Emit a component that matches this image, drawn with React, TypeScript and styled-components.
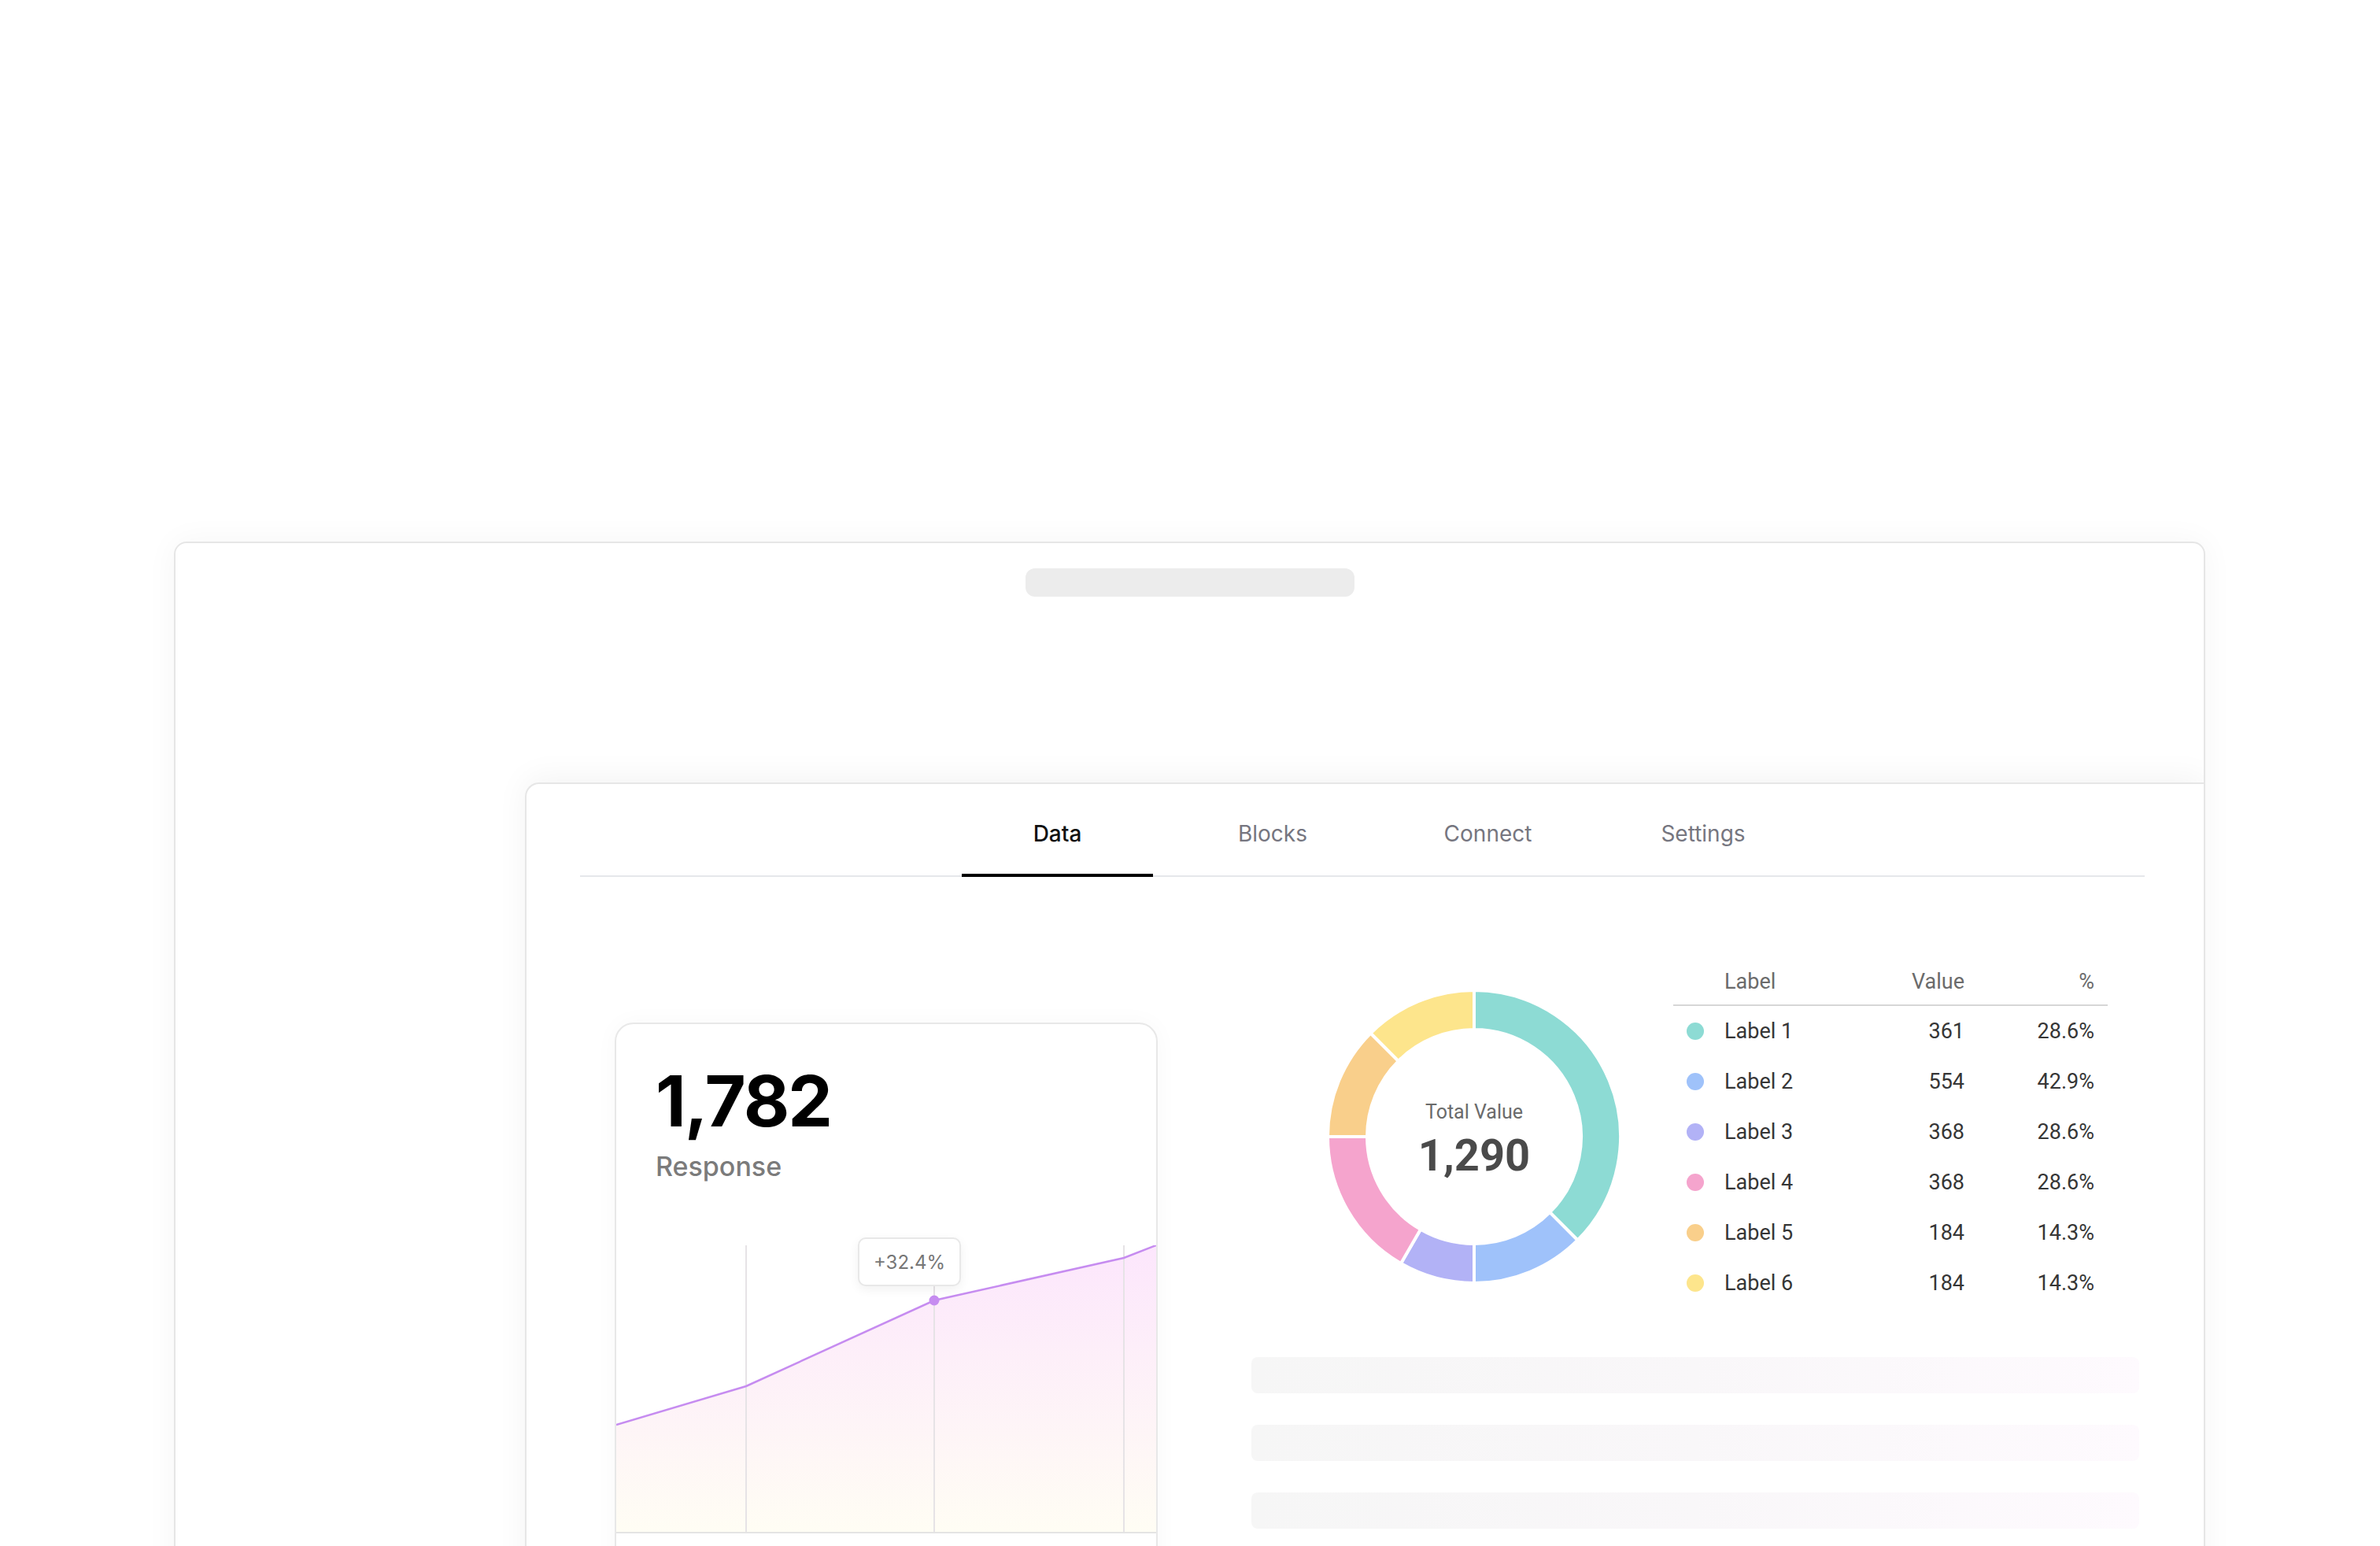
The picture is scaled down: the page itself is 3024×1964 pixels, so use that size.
import React from 'react'
import styled, { createGlobalStyle } from 'styled-components'

const GlobalStyle = createGlobalStyle`
    html, body {
        margin: 0;
        padding: 0;
        background: #ffffff;
    }
    body {
        font-family: Inter, "Noto Sans", sans-serif;
        -webkit-font-smoothing: antialiased;
    }
`

const tabs = ['Data', 'Blocks', 'Connect', 'Settings']

const segments = [
    { from: 0, to: 135, color: '#8ddbd4' },
    { from: 135, to: 180, color: '#9fc2fa' },
    { from: 180, to: 210, color: '#b2b2f6' },
    { from: 210, to: 270, color: '#f5a4cd' },
    { from: 270, to: 315, color: '#f9cf8b' },
    { from: 315, to: 360, color: '#fde58c' },
]

const rows = [
    { label: 'Label 1', value: 361, pct: '28.6%', color: '#8ddbd4' },
    { label: 'Label 2', value: 554, pct: '42.9%', color: '#9fc2fa' },
    { label: 'Label 3', value: 368, pct: '28.6%', color: '#b2b2f6' },
    { label: 'Label 4', value: 368, pct: '28.6%', color: '#f5a4cd' },
    { label: 'Label 5', value: 184, pct: '14.3%', color: '#f9cf8b' },
    { label: 'Label 6', value: 184, pct: '14.3%', color: '#fde58c' },
]

const polar = (cx: number, cy: number, r: number, deg: number) => {
    const a = ((deg - 90) * Math.PI) / 180
    return [cx + r * Math.cos(a), cy + r * Math.sin(a)]
}

const arcPath = (from: number, to: number, ro: number, ri: number, c: number) => {
    const large = to - from > 180 ? 1 : 0
    const [x1, y1] = polar(c, c, ro, from)
    const [x2, y2] = polar(c, c, ro, to)
    const [x3, y3] = polar(c, c, ri, to)
    const [x4, y4] = polar(c, c, ri, from)
    return `M${x1} ${y1} A${ro} ${ro} 0 ${large} 1 ${x2} ${y2} L${x3} ${y3} A${ri} ${ri} 0 ${large} 0 ${x4} ${y4} Z`
}

const Donut = () => (
    <DonutWrap>
        <svg width="372" height="372" viewBox="0 0 372 372">
            {segments.map((s) => (
                <path
                    key={s.from}
                    d={arcPath(s.from, s.to, 186, 136, 186)}
                    fill={s.color}
                    stroke="#ffffff"
                    strokeWidth="4"
                    strokeLinejoin="miter"
                />
            ))}
        </svg>
        <DonutCenter>
            <DonutCaption>Total Value</DonutCaption>
            <DonutValue>1,290</DonutValue>
        </DonutCenter>
    </DonutWrap>
)

const chartPoints: [number, number][] = [
    [0, 228],
    [165, 179],
    [404, 70],
    [645, 16],
    [686, 0],
]

const AreaChart = () => {
    const line = chartPoints.map(([x, y]) => `${x},${y}`).join(' ')
    const area = `M0,364 L${line.replace(/ /g, ' L')} L686,364 Z`
    return (
        <ChartWrap>
            <svg width="686" height="380" viewBox="0 0 686 380">
                <defs>
                    <linearGradient id="areaFill" x1="0" y1="0" x2="0" y2="1">
                        <stop offset="0%" stopColor="#fce6fc" />
                        <stop offset="100%" stopColor="#fffdf4" />
                    </linearGradient>
                </defs>
                <path d={area} fill="url(#areaFill)" />
                {[165, 404, 645].map((x) => (
                    <line key={x} x1={x} y1="0" x2={x} y2="364" stroke="#e6e3e6" strokeWidth="2" />
                ))}
                <line x1="0" y1="365" x2="686" y2="365" stroke="#e4e4e4" strokeWidth="2" />
                <polyline points={line} fill="none" stroke="#c68cf0" strokeWidth="2.5" />
                <circle cx="404" cy="70" r="6.5" fill="#c68cf0" />
            </svg>
            <Tooltip>+32.4%</Tooltip>
        </ChartWrap>
    )
}

const App = () => {
    return (
        <Page>
            <GlobalStyle />
            <Frame>
                <AddressPill />
                <Panel>
                    <TabList>
                        {tabs.map((t, i) => (
                            <Tab key={t} $active={i === 0}>
                                {t}
                            </Tab>
                        ))}
                    </TabList>
                    <Content>
                        <StatCard>
                            <StatNumber>1,782</StatNumber>
                            <StatLabel>Response</StatLabel>
                            <AreaChart />
                        </StatCard>
                        <RightColumn>
                            <BreakdownRow>
                                <Donut />
                                <Table>
                                    <HeaderRow>
                                        <span />
                                        <span>Label</span>
                                        <RightCell>Value</RightCell>
                                        <RightCell>%</RightCell>
                                    </HeaderRow>
                                    {rows.map((r) => (
                                        <TableRow key={r.label}>
                                            <Dot $color={r.color} />
                                            <span>{r.label}</span>
                                            <RightCell>{r.value}</RightCell>
                                            <RightCell>{r.pct}</RightCell>
                                        </TableRow>
                                    ))}
                                </Table>
                            </BreakdownRow>
                            <Skeletons>
                                <SkeletonBar />
                                <SkeletonBar />
                                <SkeletonBar />
                            </Skeletons>
                        </RightColumn>
                    </Content>
                </Panel>
            </Frame>
        </Page>
    )
}

export default App

const Page = styled.div`
    width: 3024px;
    height: 1964px;
    overflow: hidden;
    padding: 688px 0 0 221px;
    box-sizing: border-box;
`

const Frame = styled.div`
    width: 2581px;
    height: 1400px;
    box-sizing: border-box;
    border: 2px solid #e6e6e6;
    border-radius: 16px;
    background: #ffffff;
    box-shadow: 0 0 40px rgba(0, 0, 0, 0.045);
    overflow: hidden;
    display: flex;
    flex-direction: column;
`

const AddressPill = styled.div`
    align-self: center;
    width: 418px;
    height: 36px;
    margin-top: 32px;
    border-radius: 12px;
    background: #ececec;
`

const Panel = styled.div`
    margin: 236px 0 0 444px;
    flex: 1;
    box-sizing: border-box;
    border: 2px solid #e6e6e6;
    border-right: none;
    border-bottom: none;
    border-top-left-radius: 18px;
    background: #ffffff;
    box-shadow: 0 -6px 40px rgba(0, 0, 0, 0.05);
    padding: 39px 75px 0 68px;
`

const TabList = styled.div`
    display: flex;
    gap: 30.5px;
    padding-left: 485px;
    border-bottom: 2px solid #e5e7eb;
`

const Tab = styled.div<{ $active?: boolean }>`
    width: 243px;
    height: 48px;
    padding-bottom: 27px;
    display: flex;
    align-items: center;
    justify-content: center;
    font-family: Inter, sans-serif;
    font-size: 28px;
    font-weight: ${(p) => (p.$active ? 500 : 400)};
    color: ${(p) => (p.$active ? '#111111' : '#767680')};
    border-bottom: 4px solid ${(p) => (p.$active ? '#000000' : 'transparent')};
    margin-bottom: -2px;
`

const Content = styled.div`
    display: grid;
    grid-template-columns: 690px 1128px;
    column-gap: 119px;
    align-items: start;
    margin-top: 112px;
    padding-left: 44px;
`

const StatCard = styled.div`
    margin-top: 73px;
    box-sizing: border-box;
    border: 2px solid #e8e8e8;
    border-radius: 24px;
    background: #ffffff;
    box-shadow: 0 0 30px rgba(0, 0, 0, 0.03);
    padding-top: 53px;
    padding-bottom: 40px;
`

const StatNumber = styled.div`
    padding-left: 50px;
    font-family: Inter, sans-serif;
    font-size: 90px;
    line-height: 90px;
    font-weight: 700;
    color: #000000;
    letter-spacing: -2px;
`

const StatLabel = styled.div`
    margin-top: 18px;
    padding-left: 50px;
    font-family: Inter, sans-serif;
    font-size: 34px;
    line-height: 40px;
    font-weight: 500;
    color: #7b7b7b;
`

const ChartWrap = styled.div`
    position: relative;
    margin-top: 80px;
    height: 380px;

    svg {
        display: block;
    }
`

const Tooltip = styled.div`
    position: absolute;
    left: 307px;
    top: -10px;
    width: 131px;
    height: 62px;
    box-sizing: border-box;
    border: 2px solid #e8e8e8;
    border-radius: 10px;
    background: #ffffff;
    box-shadow: 0 4px 14px rgba(0, 0, 0, 0.06);
    display: flex;
    align-items: center;
    justify-content: center;
    font-family: Inter, sans-serif;
    font-size: 24px;
    color: #767676;
`

const RightColumn = styled.div`
    display: flex;
    flex-direction: column;
`

const BreakdownRow = styled.div`
    display: flex;
    align-items: center;
    gap: 67px;
    padding-left: 97px;
`

const DonutWrap = styled.div`
    position: relative;
    width: 372px;
    height: 372px;
    flex-shrink: 0;

    svg {
        display: block;
    }
`

const DonutCenter = styled.div`
    position: absolute;
    inset: 0;
    padding-top: 8px;
    display: flex;
    flex-direction: column;
    align-items: center;
    justify-content: center;
    font-family: Roboto, sans-serif;
`

const DonutCaption = styled.div`
    font-size: 25px;
    line-height: 30px;
    color: #6b6b6b;
`

const DonutValue = styled.div`
    margin-top: 9px;
    font-size: 56px;
    line-height: 62px;
    font-weight: 700;
    color: #4a4a4a;
`

const Table = styled.div`
    width: 552px;
    font-family: Roboto, sans-serif;
    font-size: 27px;
`

const HeaderRow = styled.div`
    display: grid;
    grid-template-columns: 65px 1fr 110px 165px;
    padding-right: 17px;
    height: 50px;
    line-height: 42px;
    color: #6b6b6b;
    border-bottom: 2px solid #d6d6d6;
`

const TableRow = styled.div`
    display: grid;
    grid-template-columns: 65px 1fr 110px 165px;
    align-items: center;
    padding-right: 17px;
    height: 64px;
    line-height: 64px;
    color: #363636;
`

const RightCell = styled.span`
    text-align: right;
`

const Dot = styled.span<{ $color: string }>`
    width: 22px;
    height: 22px;
    margin-left: 17px;
    border-radius: 50%;
    background: ${(p) => p.$color};
`

const Skeletons = styled.div`
    display: flex;
    flex-direction: column;
    gap: 40px;
    margin-top: 62px;
`

const SkeletonBar = styled.div`
    height: 46px;
    border-radius: 8px;
    background: linear-gradient(90deg, #f6f6f6 0%, #f9f7f9 50%, #fefafe 100%);
`
